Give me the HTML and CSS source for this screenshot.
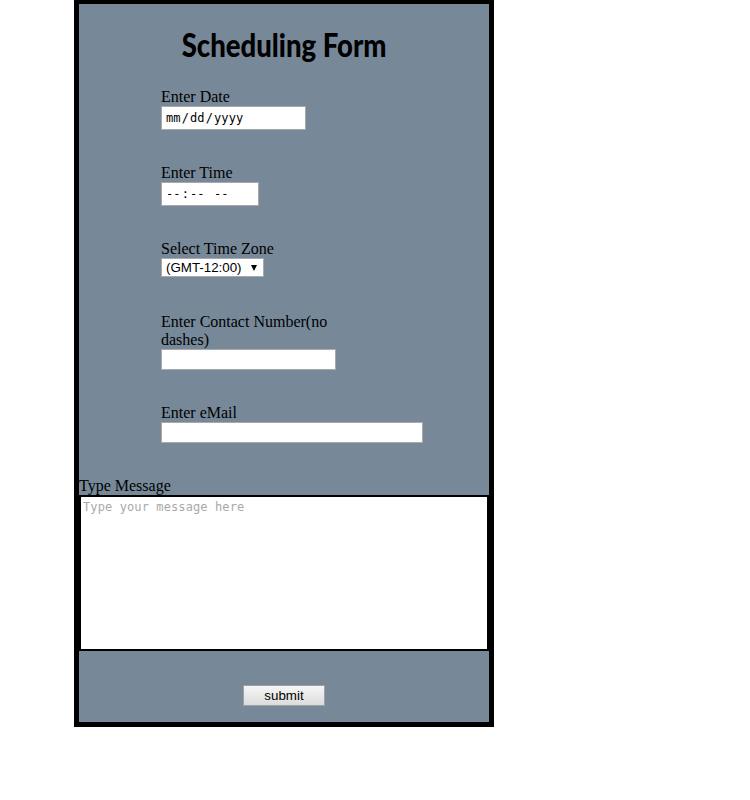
FILE: index.html
```html
<!DOCTYPE html>
<html lang="en">
<head>
<meta charset="utf-8">
<title>Scheduling Form</title>
<link rel="stylesheet" href="styles.css">
</head>
<body>
<form class="panel">
  <h1 class="title"><span class="title-text">Scheduling Form</span></h1>
  <div class="field">
    <label>Enter Date</label>
    <div class="box date"><span class="part">mm</span><span>/</span><span class="part">dd</span><span>/</span><span class="part">yyyy</span></div>
  </div>
  <div class="field">
    <label>Enter Time</label>
    <div class="box time"><span class="part">--</span><span>:</span><span class="part">--</span><span class="gap"></span><span class="part">--</span></div>
  </div>
  <div class="field zone-field">
    <label>Select Time Zone</label>
    <div class="box zone"><span class="zone-text">(GMT-12:00) International Date Line West</span><svg class="arrow" width="6" height="6" viewBox="0 0 6 6"><path d="M0 0h6L3 6z"/></svg></div>
  </div>
  <div class="field">
    <label for="phone">Enter Contact Number(no dashes)</label>
    <input class="box phone" id="phone" type="text">
  </div>
  <div class="field">
    <label for="email">Enter eMail</label>
    <input class="box email" id="email" type="text">
  </div>
  <div class="message-field">
    <label for="message">Type Message</label>
    <textarea class="message" id="message" placeholder="Type your message here"></textarea>
  </div>
  <button class="submit" type="button">submit</button>
</form>
</body>
</html>
```
FILE: styles.css
```css
* { box-sizing: border-box; }

body {
  margin: 0;
  background: #fff;
  font: 16px/18px "Liberation Serif", "Times New Roman", serif;
  color: #000;
}

.panel {
  width: 420px;
  height: 727px;
  margin-left: 74px;
  border: 5px solid #000;
  border-top-width: 4px;
  background: #778899;
}

.title {
  height: 84px;
  margin: 0;
  text-align: center;
  font: 900 32px/82px Lato, sans-serif;
  white-space: nowrap;
}

.title-text {
  display: inline-block;
  transform: scaleX(0.86);
}

.field {
  width: 175px;
  margin: 0 0 34px 82px;
}

.zone-field { margin-bottom: 36px; }

label { display: block; }

.box {
  display: flex;
  align-items: center;
  border: 1px solid #a9a9a9;
  border-radius: 0;
  padding: 0 3px;
  background: #fff;
}

.date, .time {
  height: 24px;
  font: 12px/22px "DejaVu Sans Mono", monospace;
  letter-spacing: 0.11px;
}

.date { width: 145px; }
.time { width: 98px; }
.part { padding: 0 1px; }
.gap { width: 7.33px; }

.zone {
  width: 103px;
  height: 19px;
  padding: 0 6px 0 4px;
  font: 13.333px/17px "Liberation Sans", Arial, sans-serif;
}

.zone-text {
  width: 80px;
  overflow: hidden;
  white-space: nowrap;
}

.arrow { margin-left: auto; }

input.box { height: 21px; outline: none; }
.phone { width: 175px; }
.email { width: 262px; }

.message {
  display: block;
  width: 410px;
  height: 156px;
  margin-bottom: 34px;
  border: 2px solid #000;
  border-radius: 0;
  padding: 2px;
  resize: none;
  outline: none;
  font: 12px/16px "DejaVu Sans Mono", monospace;
  letter-spacing: 0.11px;
}

.message::placeholder { color: #a9a9a9; }

.submit {
  display: block;
  width: 82px;
  height: 21px;
  margin: 0 auto;
  border: 1px solid #a0a0a0;
  border-radius: 0;
  padding: 0;
  background: linear-gradient(#f6f6f6, #dcdcdc);
  color: #000;
  font: 13.333px/19px "Liberation Sans", Arial, sans-serif;
}
```
